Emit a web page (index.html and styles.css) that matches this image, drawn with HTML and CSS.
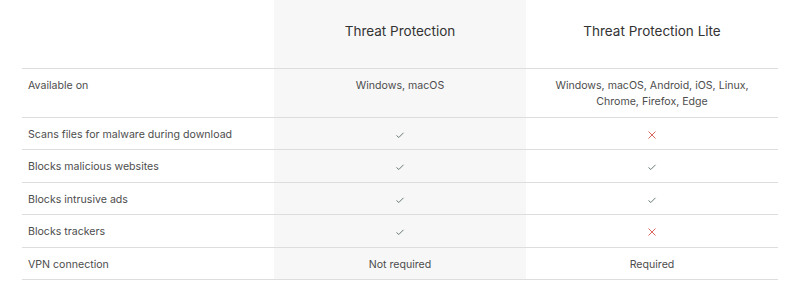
FILE: index.html
```html
<!doctype html>
<html lang="en">
<head>
  <meta charset="utf-8">
  <title>Threat Protection comparison</title>
  <link rel="stylesheet" href="styles.css">
</head>
<body>
  <table class="compare">
    <thead>
      <tr>
        <th class="feature"></th>
        <th class="hl">Threat Protection</th>
        <th>Threat Protection Lite</th>
      </tr>
    </thead>
    <tbody>
      <tr>
        <td class="feature">Available on</td>
        <td class="hl">Windows, macOS</td>
        <td>Windows, macOS, Android, iOS, Linux,<br>Chrome, Firefox, Edge</td>
      </tr>
      <tr>
        <td class="feature">Scans files for malware during download</td>
        <td class="hl"><span class="yes"></span></td>
        <td><span class="no"></span></td>
      </tr>
      <tr>
        <td class="feature">Blocks malicious websites</td>
        <td class="hl"><span class="yes"></span></td>
        <td><span class="yes"></span></td>
      </tr>
      <tr>
        <td class="feature">Blocks intrusive ads</td>
        <td class="hl"><span class="yes"></span></td>
        <td><span class="yes"></span></td>
      </tr>
      <tr>
        <td class="feature">Blocks trackers</td>
        <td class="hl"><span class="yes"></span></td>
        <td><span class="no"></span></td>
      </tr>
      <tr>
        <td class="feature">VPN connection</td>
        <td class="hl">Not required</td>
        <td>Required</td>
      </tr>
    </tbody>
  </table>
</body>
</html>
```

FILE: styles.css
```css
body {
  margin: 0;
  padding: 0 22px;
  font-family: Inter, "Noto Sans", sans-serif;
  background: #fff;
}
.compare {
  width: 756px;
  border-collapse: collapse;
  table-layout: fixed;
}
.compare th {
  height: 62px;
  padding: 0 0 6px;
  font-size: 13.5px;
  font-weight: 400;
  color: #333;
  text-align: center;
  border-bottom: 1px solid #ddd;
}
.compare td {
  padding: 9px 6px 6.5px;
  font-size: 10.6px;
  line-height: 16px;
  color: #4d4d4d;
  text-align: center;
  vertical-align: top;
  border-bottom: 1px solid #ddd;
}
.compare td.feature {
  text-align: left;
}
.hl {
  background: #f7f7f7;
}
.yes, .no {
  display: inline-block;
  width: 10px;
  height: 16px;
  vertical-align: top;
  background-repeat: no-repeat;
  background-position: center;
}
.yes {
  background-image: url("data:image/svg+xml,%3Csvg xmlns='http://www.w3.org/2000/svg' width='10' height='8' viewBox='0 0 10 8'%3E%3Cpath d='M1.5 4.5 L3.8 6.5 L8.5 1.8' fill='none' stroke='%23667a70' stroke-width='1'/%3E%3C/svg%3E");
}
.no {
  background-image: url("data:image/svg+xml,%3Csvg xmlns='http://www.w3.org/2000/svg' width='10' height='10' viewBox='0 0 10 10'%3E%3Cpath d='M1.5 1.5 L8.5 8.5 M8.5 1.5 L1.5 8.5' fill='none' stroke='%23d9675f' stroke-width='1'/%3E%3C/svg%3E");
}
```
